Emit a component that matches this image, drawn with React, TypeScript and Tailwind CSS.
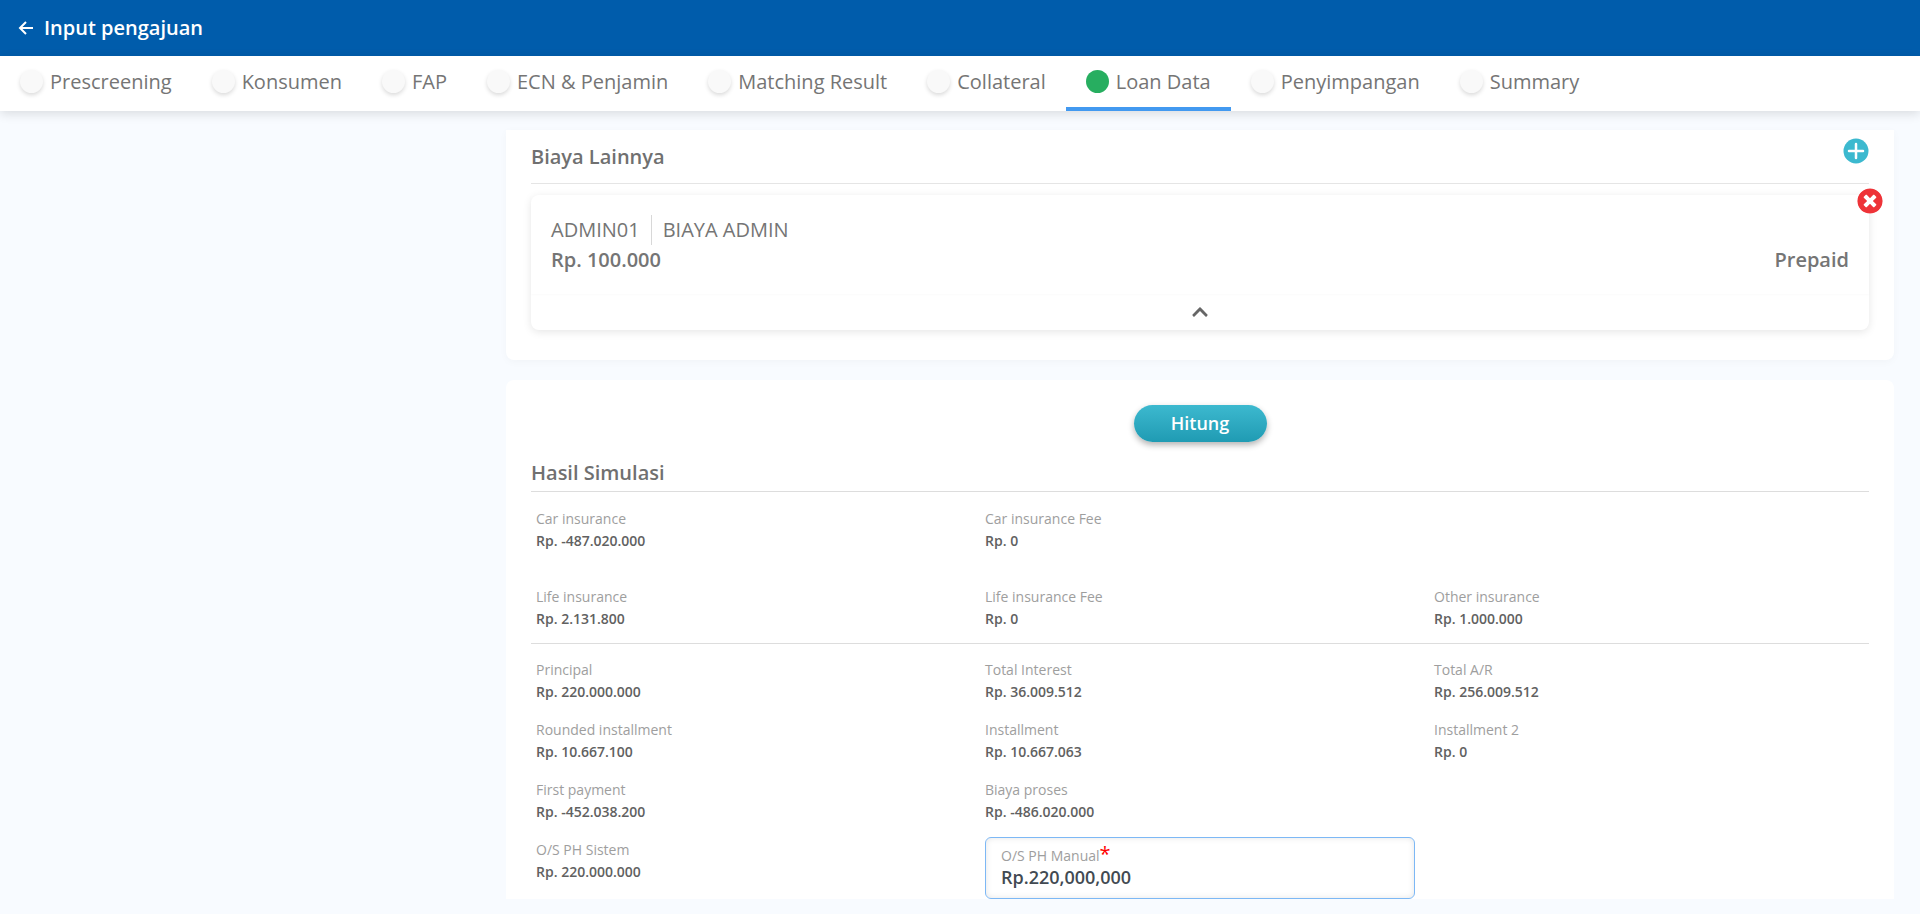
import React from "react";
import { FaChevronUp, FaTimesCircle } from "react-icons/fa";

const tabs = ["Prescreening", "Konsumen", "FAP", "ECN & Penjamin", "Matching Result", "Collateral", "Loan Data", "Penyimpangan", "Summary"];

const Field = ({ label, value }: { label: string; value: string }) => (
  <div className="h-[48px]">
    <div className="text-[14px] leading-[22px] text-[#9e9e9e]">{label}</div>
    <div className="text-[14px] leading-[22px] font-semibold text-[#616161]">{value}</div>
  </div>
);

const App = () => {
  return (
    <div className="h-screen overflow-hidden bg-[#f8fbff] font-['Open_Sans',sans-serif]">
      <header className="h-[56px] bg-[#005cab] flex items-center pl-[18px] gap-[10px] text-white">
        <svg width="16" height="16" viewBox="0 0 16 16" fill="none" stroke="currentColor" strokeWidth="2">
          <path d="M15 8H2M8 2L2 8l6 6" />
        </svg>
        <span className="text-[20px] font-semibold">Input pengajuan</span>
      </header>

      <nav className="h-[55px] bg-white flex shadow-[0_3px_10px_rgba(0,0,0,0.12)] relative">
        {tabs.map((tab) => {
          const active = tab === "Loan Data";
          return (
            <div key={tab} className={`flex items-center gap-[7px] px-[20px] h-full border-b-4 ${active ? "border-[#4299f0]" : "border-transparent"}`}>
              <span className={`w-[23px] h-[23px] rounded-full ${active ? "bg-[#27ae60]" : "bg-[#f9f9f9] shadow-[0_2px_4px_rgba(0,0,0,0.15)]"}`} />
              <span className="text-[20px] text-[#757575]">{tab}</span>
            </div>
          );
        })}
      </nav>

      <main className="pl-[506px] pr-[26px] pt-[19px] flex flex-col gap-[20px]">
        <section className="h-[230px] bg-white rounded-b-lg px-[25px] shadow-[0_2px_8px_rgba(0,0,0,0.03)]">
          <div className="h-[54px] flex items-center justify-between border-b border-[#e5e5e5]">
            <h2 className="text-[20px] font-semibold text-[#707070]">Biaya Lainnya</h2>
            <svg width="26" height="26" viewBox="0 0 26 26" className="mb-[12px]">
              <circle cx="13" cy="13" r="12.5" fill="#3cb9cf" />
              <path d="M13 6v14M6 13h14" stroke="#fff" strokeWidth="2.5" strokeLinecap="round" />
            </svg>
          </div>
          <div className="relative mt-[11px] h-[135px] rounded-lg bg-white shadow-[0_2px_8px_rgba(0,0,0,0.1)]">
            <div className="h-[99px] px-[20px] pt-[20px] text-[#757575] shadow-[0_1px_2px_rgba(0,0,0,0.02)]">
              <div className="flex items-center h-[30px] text-[20px]">
                <span>ADMIN01</span>
                <span className="w-px h-[30px] bg-[#d8d8d8] mx-[11px]" />
                <span>BIAYA ADMIN</span>
              </div>
              <div className="flex justify-between text-[20px] font-semibold leading-[30px]">
                <span>Rp. 100.000</span>
                <span>Prepaid</span>
              </div>
            </div>
            <div className="h-[36px] flex items-center justify-center text-[#666666]">
              <FaChevronUp size={18} />
            </div>
            <FaTimesCircle size={26} className="absolute -top-[7px] -right-[14px] text-[#ee3338] bg-white rounded-full" />
          </div>
        </section>

        <section className="bg-white rounded-t-lg px-[25px] pt-[25px]">
          <div className="flex justify-center">
            <button className="w-[133px] h-[37px] rounded-full text-white text-[18px] font-semibold bg-gradient-to-b from-[#3cb9cf] to-[#1f9bb3] shadow-[0_3px_6px_rgba(0,0,0,0.3)]">
              Hitung
            </button>
          </div>
          <h2 className="mt-[9px] h-[41px] text-[20px] leading-[43px] font-semibold text-[#707070] border-b border-[#dddddd]">Hasil Simulasi</h2>

          <div className="px-[5px] pt-[16px] grid grid-cols-3 gap-x-[19px]">
            <Field label="Car insurance" value="Rp. -487.020.000" />
            <Field label="Car insurance Fee" value="Rp. 0" />
            <div />
          </div>
          <div className="px-[5px] pt-[30px] grid grid-cols-3 gap-x-[19px]">
            <Field label="Life insurance" value="Rp. 2.131.800" />
            <Field label="Life insurance Fee" value="Rp. 0" />
            <Field label="Other insurance" value="Rp. 1.000.000" />
          </div>
          <div className="mt-[9px] border-b border-[#dddddd]" />
          <div className="px-[5px] pt-[15px] grid grid-cols-3 gap-x-[19px] gap-y-[12px]">
            <Field label="Principal" value="Rp. 220.000.000" />
            <Field label="Total Interest" value="Rp. 36.009.512" />
            <Field label="Total A/R" value="Rp. 256.009.512" />
            <Field label="Rounded installment" value="Rp. 10.667.100" />
            <Field label="Installment" value="Rp. 10.667.063" />
            <Field label="Installment 2" value="Rp. 0" />
            <Field label="First payment" value="Rp. -452.038.200" />
            <Field label="Biaya proses" value="Rp. -486.020.000" />
            <div />
            <Field label="O/S PH Sistem" value="Rp. 220.000.000" />
            <div className="h-[62px] -mt-[2px] rounded-md border border-[#7db8f5] px-[15px] pt-[9px] shadow-[inset_0_0_6px_rgba(0,0,0,0.1)]">
              <div className="text-[14px] leading-[18px] text-[#9e9e9e]">
                O/S PH Manual<span className="text-[#ff0000] text-[20px] leading-[10px]">*</span>
              </div>
              <div className="text-[18px] leading-[24px] font-semibold text-[#424a52]">Rp.220,000,000</div>
            </div>
            <div />
          </div>
        </section>
      </main>
    </div>
  );
};

export default App;
